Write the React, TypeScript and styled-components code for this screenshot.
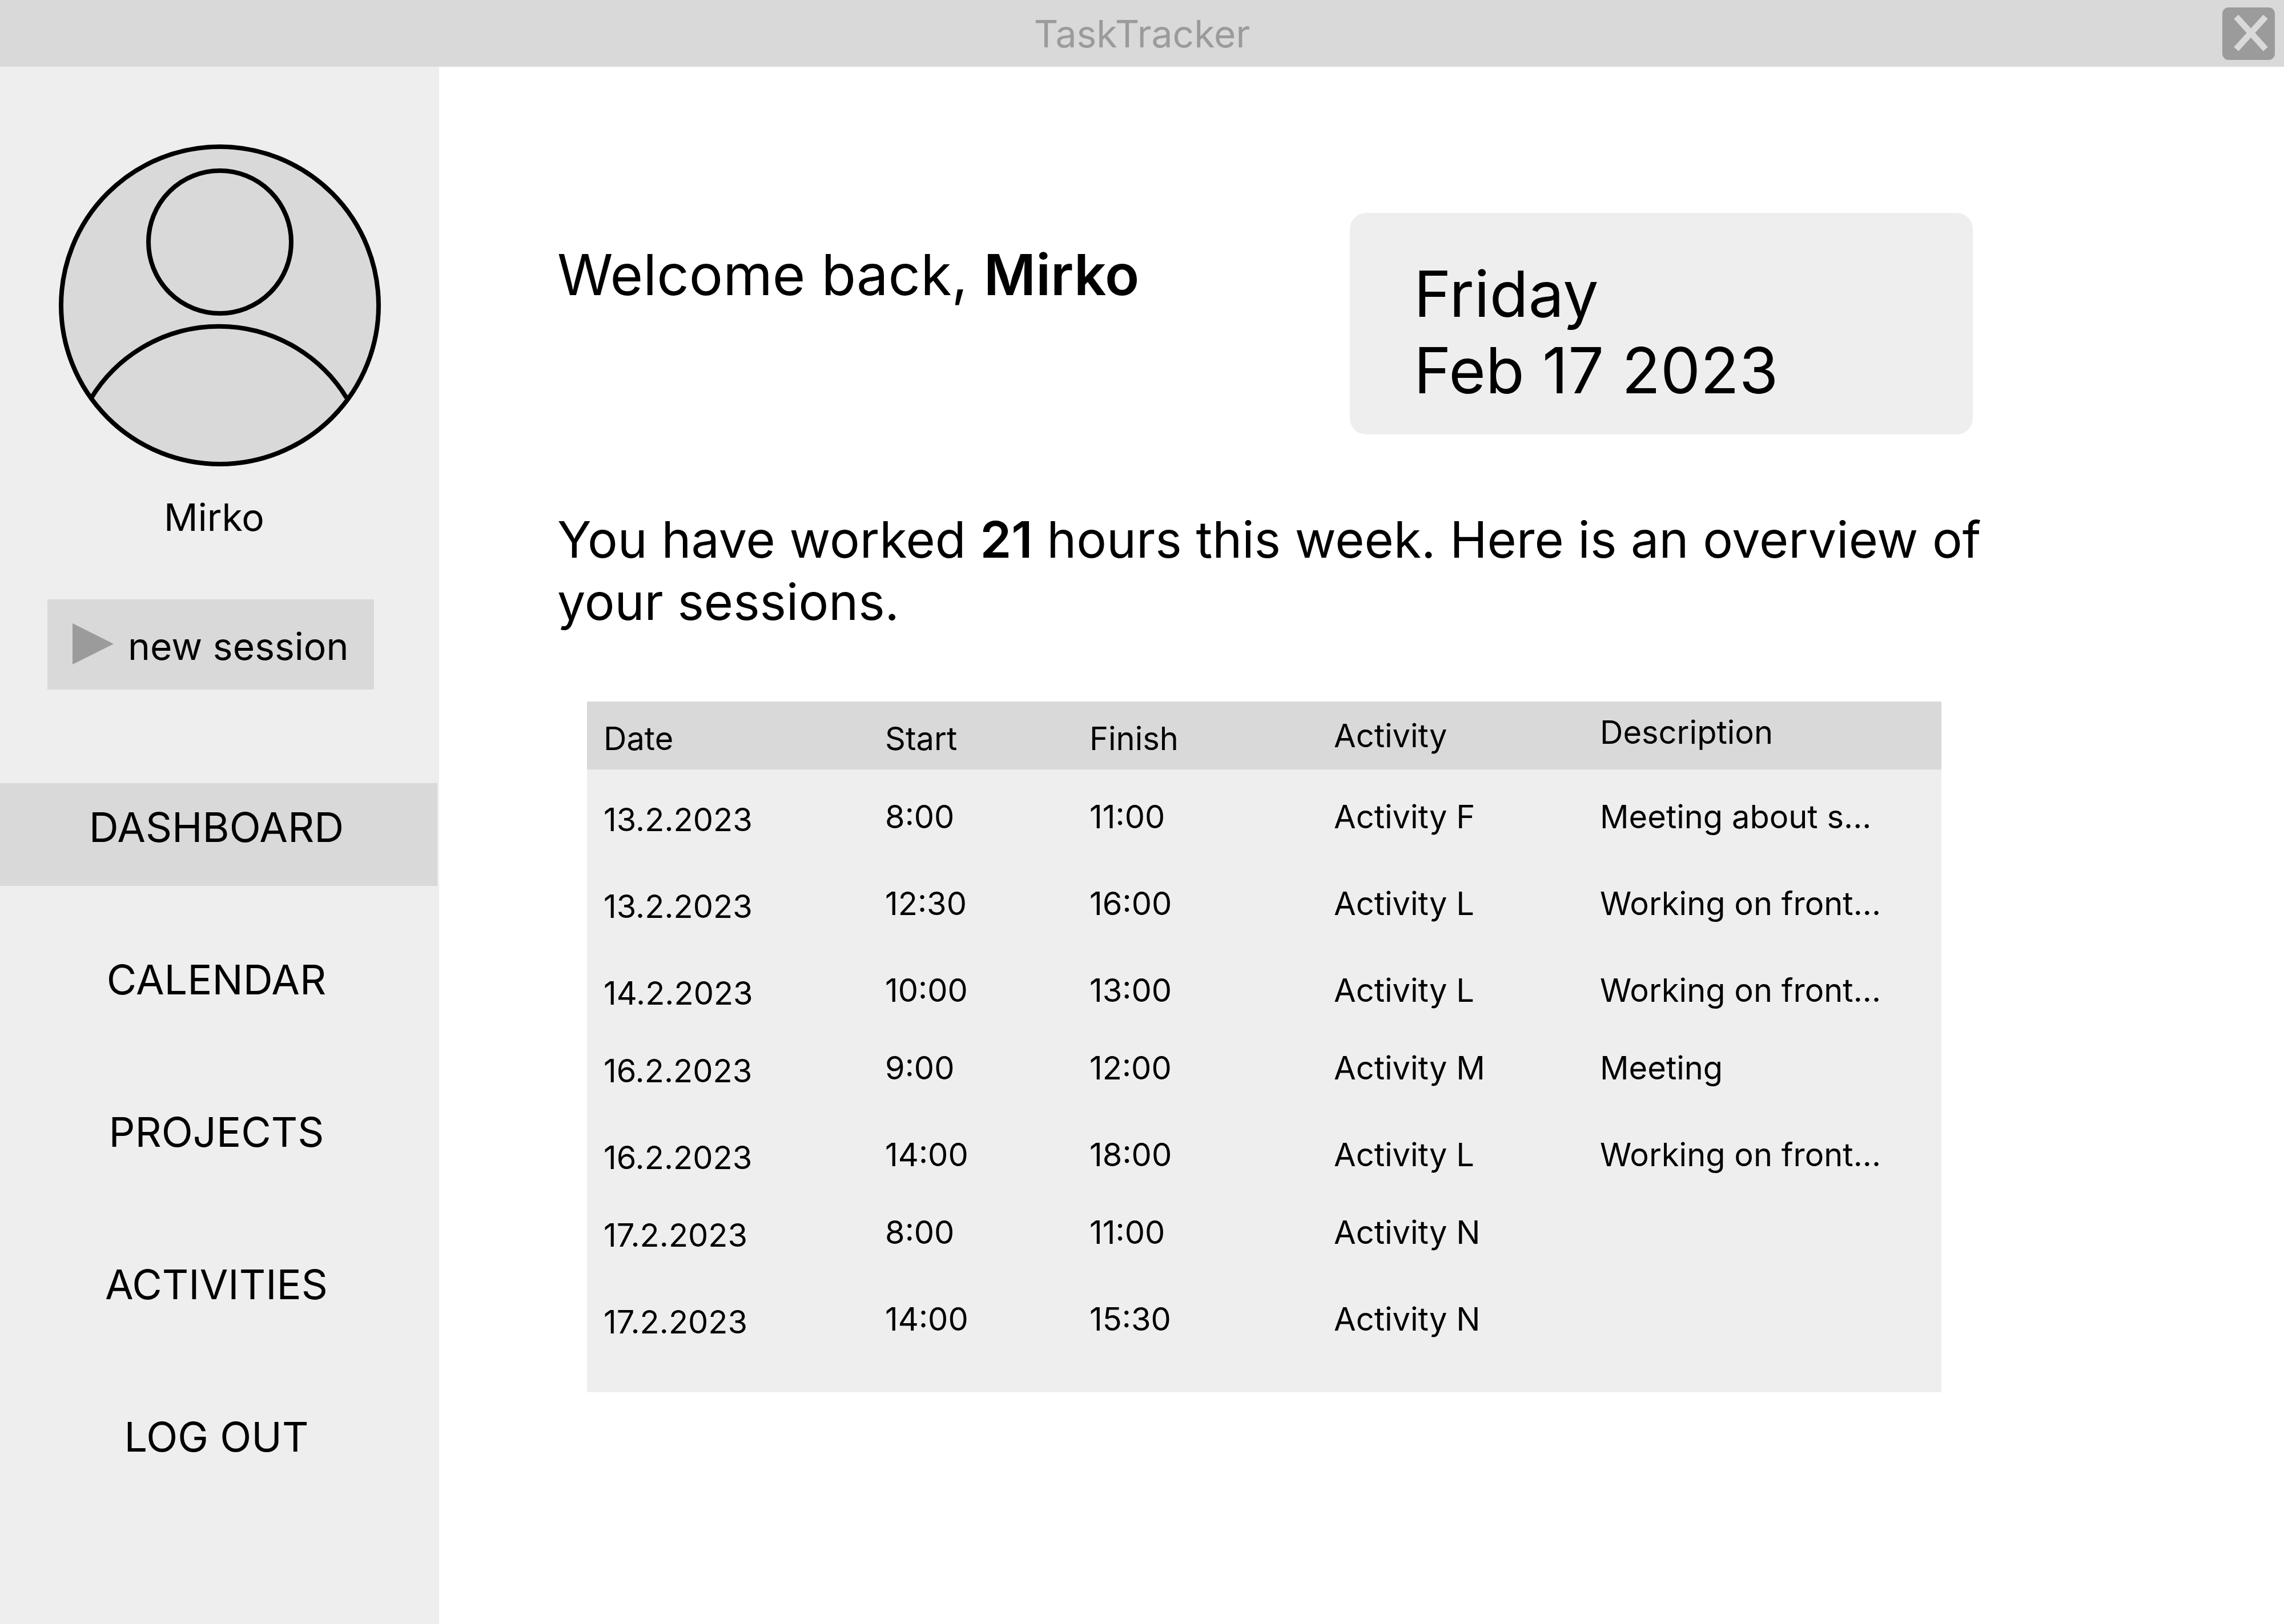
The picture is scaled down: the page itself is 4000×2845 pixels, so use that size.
import React from "react";
import styled, { createGlobalStyle } from "styled-components";

const color = {
  ink: "#000000",
  bar: "#d9d9d9",
  panel: "#eeeeee",
  muted: "#9b9b9b",
  page: "#ffffff",
};

const GlobalStyle = createGlobalStyle`
  *, *::before, *::after { box-sizing: border-box; }
  body {
    margin: 0;
    background: ${color.page};
    color: ${color.ink};
    font-family: Inter, "Liberation Sans", sans-serif;
    font-optical-sizing: none;
  }
  h1, p { margin: 0; font-weight: 400; }
  b { font-weight: 600; }
  button { font-family: inherit; color: inherit; }
`;

const Page = styled.div`
  display: flex;
  flex-direction: column;
  min-height: 100vh;
`;

const TitleBar = styled.header`
  display: grid;
  grid-template-columns: 1fr auto 1fr;
  align-items: center;
  padding: 13px 16px 12px;
  background: ${color.bar};
`;

const AppTitle = styled.span`
  grid-column: 2;
  font-size: 66px;
  line-height: 80px;
  color: ${color.muted};
`;

const CloseButton = styled.button`
  justify-self: end;
  display: block;
  width: 92px;
  height: 92px;
  padding: 0;
  border: 0;
  border-radius: 11px;
  background: ${color.muted};
  cursor: pointer;
`;

const Body = styled.div`
  display: flex;
  flex: 1;
`;

const Sidebar = styled.aside`
  flex: none;
  display: flex;
  flex-direction: column;
  align-items: flex-start;
  width: 769px;
  padding-top: 136px;
  background: ${color.panel};
`;

const Profile = styled.div`
  display: flex;
  flex-direction: column;
  gap: 49px;
  margin-left: 103px;
`;

const AvatarDrawing = styled.svg`
  display: block;
  width: 564px;
  height: 564px;
`;

const ProfileName = styled.p`
  padding-right: 20px;
  font-size: 66px;
  line-height: 80px;
  text-align: center;
`;

const SessionButton = styled.button`
  display: flex;
  align-items: flex-start;
  gap: 25px;
  margin: 104px 0 164px 83px;
  padding: 42px 45px 36px 44px;
  border: 0;
  background: ${color.bar};
  font-size: 66px;
  line-height: 80px;
  white-space: nowrap;
  cursor: pointer;
`;

const PlayDrawing = styled.svg`
  display: block;
  width: 72px;
  height: 72px;
  fill: ${color.muted};
`;

const Nav = styled.nav`
  display: flex;
  flex-direction: column;
  gap: 87px;
  width: 100%;
  padding-right: 3px;
`;

const NavLink = styled.a<{ $active?: boolean }>`
  padding: 33px 8px 59px 0;
  background: ${(p) => (p.$active ? color.bar : "transparent")};
  color: inherit;
  font-size: 72px;
  line-height: 88px;
  text-align: center;
  text-decoration: none;
`;

const Main = styled.main`
  flex: 1;
  min-width: 0;
  padding: 256px 500px 120px 207px;
`;

const Intro = styled.div`
  display: grid;
  grid-template-columns: 1388fr 1091fr;
  align-items: start;
  padding-right: 45px;
`;

const Welcome = styled.h1`
  padding-top: 48px;
  font-size: 99px;
  line-height: 121px;
`;

const DateCard = styled.div`
  padding: 75px 112px 45px;
  border-radius: 28px;
  background: ${color.panel};
  font-size: 111px;
  line-height: 134px;
`;

const Summary = styled.p`
  margin: 130px 0 120px;
  font-size: 88px;
  line-height: 109px;
`;

const TablePanel = styled.div`
  margin: 0 100px 0 52px;
  padding-bottom: 59px;
  background: ${color.panel};
`;

const Table = styled.table`
  width: 100%;
  table-layout: fixed;
  border-collapse: collapse;
  font-size: 56px;
  line-height: 68px;
  text-align: left;
  white-space: nowrap;
`;

type Align = "top" | "middle" | "bottom";

const Column = styled.col<{ $width?: number }>`
  width: ${(p) => (p.$width ? `${p.$width}px` : "auto")};
`;

const HeadCell = styled.th<{ $align: Align }>`
  height: 119px;
  padding: 20px 0 20px 29px;
  background: ${color.bar};
  font-weight: 400;
  vertical-align: ${(p) => p.$align};
`;

const Row = styled.tr<{ $compact?: boolean }>`
  height: ${(p) => (p.$compact ? 136 : 152)}px;
  --row-space: ${(p) => (p.$compact ? 14 : 30)}px;
`;

const Cell = styled.td<{ $align: Align }>`
  padding: 49px 0 var(--row-space) 29px;
  vertical-align: ${(p) => p.$align};
`;

type Field = "date" | "start" | "finish" | "activity" | "description";

const columns: {
  field: Field;
  label: string;
  width?: number;
  head: Align;
  cell: Align;
}[] = [
  { field: "date", label: "Date", width: 493, head: "bottom", cell: "bottom" },
  { field: "start", label: "Start", width: 358, head: "bottom", cell: "top" },
  { field: "finish", label: "Finish", width: 428, head: "bottom", cell: "top" },
  { field: "activity", label: "Activity", width: 466, head: "middle", cell: "top" },
  { field: "description", label: "Description", head: "top", cell: "top" },
];

type Session = Record<Field, string> & { compact?: boolean };

const sessions: Session[] = [
  { date: "13.2.2023", start: "8:00", finish: "11:00", activity: "Activity F", description: "Meeting about s..." },
  { date: "13.2.2023", start: "12:30", finish: "16:00", activity: "Activity L", description: "Working on front..." },
  { date: "14.2.2023", start: "10:00", finish: "13:00", activity: "Activity L", description: "Working on front...", compact: true },
  { date: "16.2.2023", start: "9:00", finish: "12:00", activity: "Activity M", description: "Meeting" },
  { date: "16.2.2023", start: "14:00", finish: "18:00", activity: "Activity L", description: "Working on front...", compact: true },
  { date: "17.2.2023", start: "8:00", finish: "11:00", activity: "Activity N", description: "" },
  { date: "17.2.2023", start: "14:00", finish: "15:30", activity: "Activity N", description: "" },
];

const links = ["DASHBOARD", "CALENDAR", "PROJECTS", "ACTIVITIES", "LOG OUT"];

function Avatar() {
  return (
    <AvatarDrawing viewBox="0 0 564 564" role="img" aria-label="Profile picture">
      <g fill={color.bar} stroke={color.ink} strokeWidth="8">
        <circle cx="282" cy="282" r="278" />
        <circle cx="282" cy="171" r="125" />
        <path d="M57 444 A262 262 0 0 1 504 444" fill="none" />
      </g>
    </AvatarDrawing>
  );
}

export default function App() {
  return (
    <Page>
      <GlobalStyle />
      <TitleBar>
        <AppTitle>TaskTracker</AppTitle>
        <CloseButton type="button" aria-label="Close">
          <svg width="92" height="92" viewBox="0 0 92 92" display="block">
            <path
              d="M24.3 16.4 L75.7 73 M75.7 16.4 L24.3 73"
              stroke={color.bar}
              strokeWidth="10.8"
            />
          </svg>
        </CloseButton>
      </TitleBar>
      <Body>
        <Sidebar>
          <Profile>
            <Avatar />
            <ProfileName>Mirko</ProfileName>
          </Profile>
          <SessionButton type="button">
            <PlayDrawing viewBox="0 0 72 72" aria-hidden="true">
              <path d="M0 0 L72 36 L0 72 Z" />
            </PlayDrawing>
            new session
          </SessionButton>
          <Nav>
            {links.map((label, i) => (
              <NavLink
                key={label}
                href="#"
                $active={i === 0}
                aria-current={i === 0 ? "page" : undefined}
              >
                {label}
              </NavLink>
            ))}
          </Nav>
        </Sidebar>
        <Main>
          <Intro>
            <Welcome>
              Welcome back, <b>Mirko</b>
            </Welcome>
            <DateCard>
              <p>Friday</p>
              <p>Feb 17 2023</p>
            </DateCard>
          </Intro>
          <Summary>
            You have worked <b>21</b> hours this week. Here is an overview of
            your sessions.
          </Summary>
          <TablePanel>
            <Table>
              <colgroup>
                {columns.map((c) => (
                  <Column key={c.field} $width={c.width} />
                ))}
              </colgroup>
              <thead>
                <tr>
                  {columns.map((c) => (
                    <HeadCell key={c.field} scope="col" $align={c.head}>
                      {c.label}
                    </HeadCell>
                  ))}
                </tr>
              </thead>
              <tbody>
                {sessions.map((s, i) => (
                  <Row key={i} $compact={s.compact}>
                    {columns.map((c) => (
                      <Cell key={c.field} $align={c.cell}>
                        {s[c.field]}
                      </Cell>
                    ))}
                  </Row>
                ))}
              </tbody>
            </Table>
          </TablePanel>
        </Main>
      </Body>
    </Page>
  );
}
